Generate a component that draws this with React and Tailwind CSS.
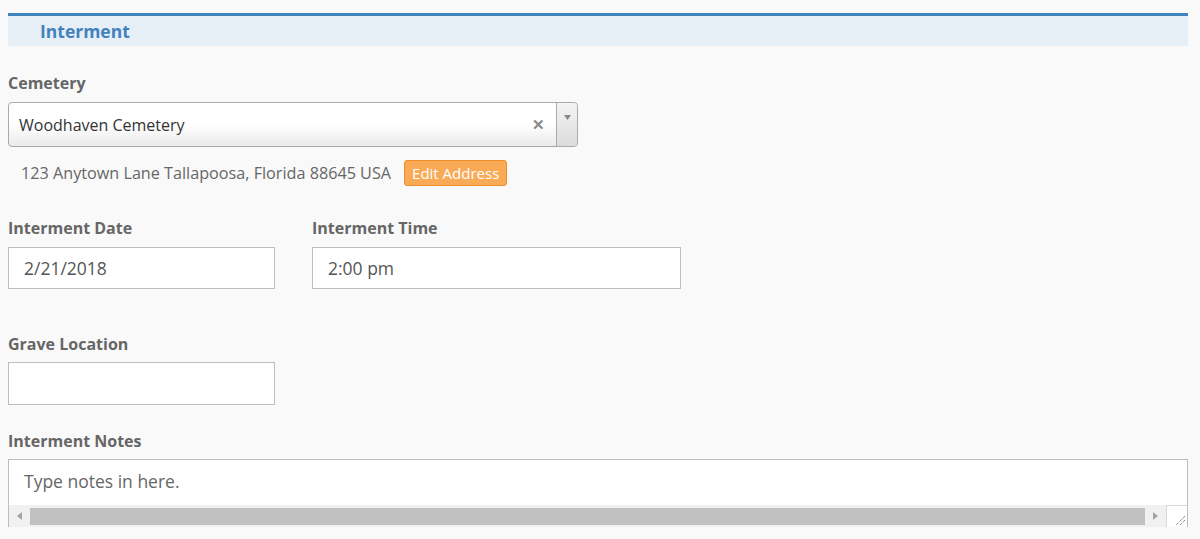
import React from "react";

const font = { fontFamily: '"Open Sans", "Liberation Sans", sans-serif' };

function Label({ children }) {
  return (
    <div className="text-[16px] font-bold leading-5 text-[#666]">{children}</div>
  );
}

function TextBox({ value, className = "" }) {
  return (
    <div
      className={
        "flex items-center border border-[#bdbdbd] bg-white px-[15px] text-[17.5px] text-[#555] " +
        className
      }
    >
      {value}
    </div>
  );
}

export default function App() {
  return (
    <div className="min-h-screen bg-[#f9f9f9] pt-[13px]" style={font}>
      <div className="w-[1180px] ml-2">
        {/* Section header */}
        <div className="h-[33px] border-t-[3px] border-[#4282bd] bg-[#e6eef6] pl-8 flex items-center">
          <span className="text-[17.5px] font-bold text-[#4282bd]">Interment</span>
        </div>

        {/* Cemetery */}
        <div className="mt-[27px]">
          <Label>Cemetery</Label>
          <div className="mt-[9px] flex h-[45px] w-[570px] items-stretch rounded-[4px] border border-[#aaa] bg-gradient-to-b from-white from-50% to-[#eaeaea]">
            <div className="flex flex-1 items-center pl-[10px] text-[16px] text-[#333]">
              Woodhaven Cemetery
            </div>
            <div className="flex w-[36px] items-center justify-center text-[15px] font-black text-[#888]">
              ✕
            </div>
            <div className="flex w-[21px] justify-center rounded-r-[4px] border-l border-[#aaa] bg-gradient-to-b from-[#f4f4f4] to-[#dcdcdc] pt-[12px]">
              <svg width="7" height="5" viewBox="0 0 7 5">
                <path d="M0 0 L7 0 L3.5 5 Z" fill="#888" />
              </svg>
            </div>
          </div>
          <div className="mt-[13px] flex items-center gap-[13px] pl-[13px]">
            <span className="text-[16.2px] text-[#666]">
              123 Anytown Lane Tallapoosa, Florida 88645 USA
            </span>
            <span className="flex h-[26px] items-center rounded-[3px] border border-[#ef8d2b] bg-[#f9aa56] px-[7px] text-[15px] text-white">
              Edit Address
            </span>
          </div>
        </div>

        {/* Date + time */}
        <div className="mt-[32px] flex gap-[37px]">
          <div>
            <Label>Interment Date</Label>
            <TextBox value="2/21/2018" className="mt-[9px] h-[42px] w-[267px]" />
          </div>
          <div>
            <Label>Interment Time</Label>
            <TextBox value="2:00 pm" className="mt-[9px] h-[42px] w-[369px]" />
          </div>
        </div>

        {/* Grave location */}
        <div className="mt-[45px]">
          <Label>Grave Location</Label>
          <TextBox value="" className="mt-[8px] h-[43px] w-[267px]" />
        </div>

        {/* Notes */}
        <div className="mt-[26px]">
          <Label>Interment Notes</Label>
          <div className="mt-[8px] border-x border-t border-[#bdbdbd] bg-white">
            <div className="h-[45px] pl-[15px] pt-[8px] text-[17.5px] text-[#666]">
              Type notes in here.
            </div>
            <div className="flex h-[22px] items-center bg-[#f1f1f1]">
              <div className="flex w-[21px] justify-center">
                <svg width="5" height="8" viewBox="0 0 5 8">
                  <path d="M5 0 L0 4 L5 8 Z" fill="#a3a3a3" />
                </svg>
              </div>
              <div className="h-[17px] flex-1 bg-[#c1c1c1]" />
              <div className="flex w-[21px] justify-center">
                <svg width="5" height="8" viewBox="0 0 5 8">
                  <path d="M0 0 L5 4 L0 8 Z" fill="#a3a3a3" />
                </svg>
              </div>
              <div className="relative h-[22px] w-[21px] border-l border-t border-[#d8d8d8] bg-white">
                <svg className="absolute bottom-[2px] right-[2px]" width="10" height="10" viewBox="0 0 10 10">
                  <path d="M10 1 L1 10 M10 5 L5 10" stroke="#555" strokeWidth="1" strokeDasharray="1 1" />
                </svg>
              </div>
            </div>
          </div>
        </div>
      </div>
    </div>
  );
}
